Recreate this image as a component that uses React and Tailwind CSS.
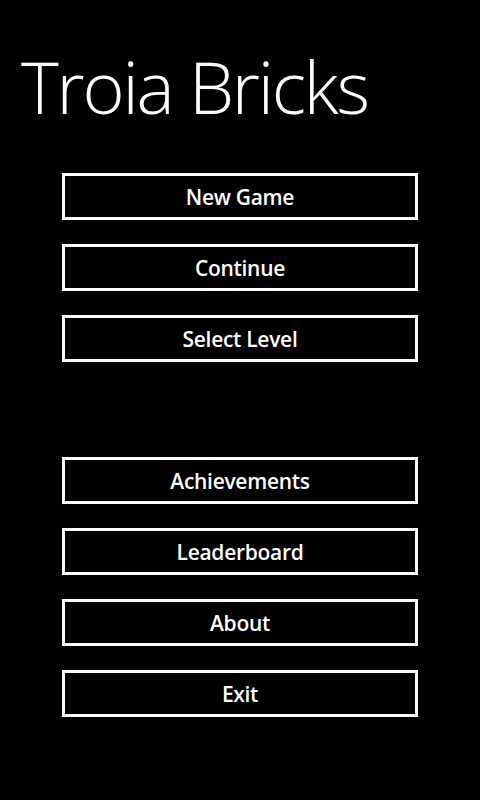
const items = ['New Game', 'Continue', 'Select Level', null, 'Achievements', 'Leaderboard', 'About', 'Exit'];

export default function App() {
  return (
    <div className="w-[480px] h-[800px] bg-black text-white overflow-hidden" style={{ fontFamily: '"Open Sans", "Noto Sans", sans-serif' }}>
      <h1 className="pl-[21px] pt-[46px] text-[72px] font-light leading-[80px] tracking-[-2.2px]">Troia Bricks</h1>

      <div className="mt-[47px] ml-[62px] w-[356px] flex flex-col gap-[24px]">
        {items.map((label, i) =>
          label ? (
            <button
              key={i}
              className="h-[47px] pt-[2px] border-[3px] border-white flex items-center justify-center text-[21px] font-semibold tracking-[-0.3px]"
            >
              {label}
            </button>
          ) : (
            <div key={i} className="h-[47px]" />
          )
        )}
      </div>
    </div>
  );
}
